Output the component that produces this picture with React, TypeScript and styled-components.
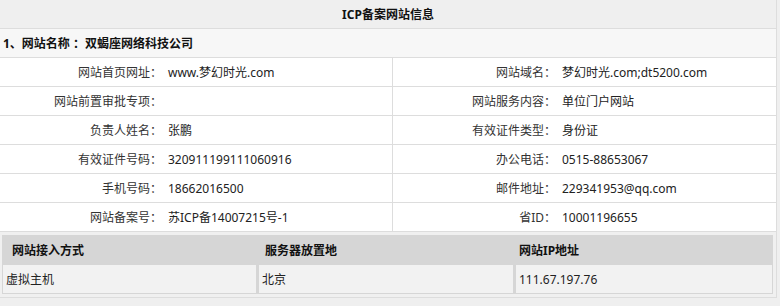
import React from 'react'
import styled, { createGlobalStyle } from 'styled-components'

const GlobalStyle = createGlobalStyle`
  html, body {
    margin: 0;
    padding: 0;
    background: #efefef;
  }
  body {
    font-family: 'Noto Sans', 'Noto Sans CJK SC', sans-serif;
    font-size: 12px;
    color: #333;
  }
`

const Panel = styled.div`
  width: 776px;
  background: #fff;
  border-right: 1px solid #ddd;
`

const TitleBar = styled.div`
  height: 28px;
  display: flex;
  align-items: center;
  justify-content: center;
  background: #efefef;
  border-bottom: 1px solid #ddd;
  font-weight: bold;
  color: #111;
`

const SiteName = styled.div`
  height: 28px;
  display: flex;
  align-items: center;
  padding-left: 3px;
  background: #f7f7f7;
  border-bottom: 1px solid #ddd;
  font-weight: bold;
  color: #111;
`

const InfoGrid = styled.div`
  display: grid;
  grid-template-columns: 393px 1fr;
`

const InfoCell = styled.div<{ $left?: boolean }>`
  height: 28px;
  display: flex;
  align-items: center;
  border-bottom: 1px solid #ddd;
  border-right: ${(p) => (p.$left ? '1px solid #ddd' : 'none')};
`

const Label = styled.span<{ $width: number }>`
  width: ${(p) => p.$width}px;
  flex-shrink: 0;
  text-align: right;
`

const Value = styled.span`
  padding-left: 6px;
  color: #222;
`

const HostSection = styled.div`
  background: #f0f0f0;
  padding: 3px 3px 3px 2px;
  border-bottom: 1px solid #ddd;
`

const HostTable = styled.div`
  background: #d6d6d6;
  padding: 0 1px 1px 1px;
`

const HostRow = styled.div<{ $head?: boolean }>`
  display: grid;
  grid-template-columns: 253px 254px 1fr;
  column-gap: ${(p) => (p.$head ? '0' : '3px')};
  height: ${(p) => (p.$head ? 30 : 28)}px;
`

const HostCell = styled.div<{ $head?: boolean }>`
  display: flex;
  align-items: center;
  padding-left: ${(p) => (p.$head ? 9 : 3)}px;
  background: ${(p) => (p.$head ? '#d6d6d6' : '#f2f2f2')};
  font-weight: ${(p) => (p.$head ? 'bold' : 'normal')};
  color: ${(p) => (p.$head ? '#111' : '#222')};
`

type Pair = [string, string]

const rows: [Pair, Pair][] = [
  [['网站首页网址：', 'www.梦幻时光.com'], ['网站域名：', '梦幻时光.com;dt5200.com']],
  [['网站前置审批专项：', ''], ['网站服务内容：', '单位门户网站']],
  [['负责人姓名：', '张鹏'], ['有效证件类型：', '身份证']],
  [['有效证件号码：', '320911199111060916'], ['办公电话：', '0515-88653067']],
  [['手机号码：', '18662016500'], ['邮件地址：', '229341953@qq.com']],
  [['网站备案号：', '苏ICP备14007215号-1'], ['省ID：', '10001196655']],
]

const hostHead = ['网站接入方式', '服务器放置地', '网站IP地址']
const hostData = ['虚拟主机', '北京', '111.67.197.76']

export default function App() {
  return (
    <>
      <GlobalStyle />
      <Panel>
        <TitleBar>ICP备案网站信息</TitleBar>
        <SiteName>1、网站名称 ：双蝎座网络科技公司</SiteName>
        <InfoGrid>
          {rows.map(([l, r]) => (
            <React.Fragment key={l[0]}>
              <InfoCell $left>
                <Label $width={162}>{l[0]}</Label>
                <Value>{l[1]}</Value>
              </InfoCell>
              <InfoCell>
                <Label $width={163}>{r[0]}</Label>
                <Value>{r[1]}</Value>
              </InfoCell>
            </React.Fragment>
          ))}
        </InfoGrid>
        <HostSection>
          <HostTable>
            <HostRow $head>
              {hostHead.map((h) => (
                <HostCell $head key={h}>{h}</HostCell>
              ))}
            </HostRow>
            <HostRow>
              {hostData.map((d) => (
                <HostCell key={d}>{d}</HostCell>
              ))}
            </HostRow>
          </HostTable>
        </HostSection>
      </Panel>
    </>
  )
}
